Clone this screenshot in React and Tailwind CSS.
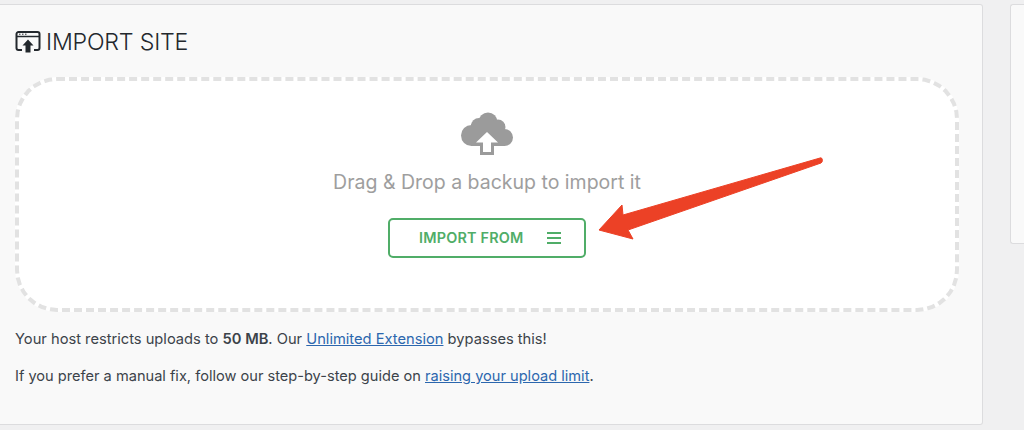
import React from "react";

const font = { fontFamily: "Inter, sans-serif" };

const SiteUploadIcon = () => (
  <svg width="26" height="24" viewBox="0 0 26 24" fill="none" className="shrink-0">
    <path d="M7 20H3.500A2 2 0 0 1 1.500 18V4A2 2 0 0 1 3.500 2H22.500A2 2 0 0 1 24.500 4V18A2 2 0 0 1 22.500 20H19" stroke="#23282d" strokeWidth="2" />
    <path d="M2 6.500H24" stroke="#23282d" strokeWidth="1.500" />
    <path d="M4 4.200H5.500M7 4.200H8.500M10 4.200H11.500" stroke="#23282d" strokeWidth="1" />
    <path d="M13 9.500L18.500 15.500H15.500V22.500H10.500V15.500H7.500Z" fill="#23282d" />
  </svg>
);

const CloudIcon = () => (
  <svg width="54" height="44" viewBox="0 0 54 44">
    <g fill="#9b9b9b">
      <circle cx="11.500" cy="23.500" r="10.500" />
      <circle cx="19" cy="14" r="8" />
      <circle cx="28" cy="10" r="9.500" />
      <circle cx="38" cy="15" r="7.500" />
      <circle cx="44.500" cy="25.500" r="8.500" />
      <rect x="11" y="12" width="34" height="22" />
      <rect x="20" y="30" width="14" height="13" />
    </g>
    <path d="M27 20L38 30.500H31V40H23V30.500H16Z" fill="#ffffff" />
  </svg>
);

const Arrow = () => (
  <svg
    width="240"
    height="100"
    viewBox="0 0 240 100"
    className="absolute left-[590px] top-[150px] pointer-events-none"
  >
    <path
      d="M9 80L32 55L33 65L230 8C233 7 233 12 231 13L38 80L43 89Z"
      fill="#ec4126"
      stroke="#ec4126"
      strokeWidth="1"
      strokeLinejoin="round"
    />
  </svg>
);

export default function App() {
  return (
    <div className="relative h-[430px] w-[1024px] overflow-hidden bg-[#f0f0f1] pt-1" style={font}>
      <div className="flex items-start gap-[27px]">
        <section className="h-[421px] w-[983px] shrink-0 rounded-r-[3px] border border-l-0 border-[#dcdcde] bg-[#f9f9f9] pl-[15px] pr-[23px] pt-[23px]">
          <h1 className="flex h-[28px] items-center gap-[5px] text-[23.200px] font-light leading-7 tracking-[-0.2px] text-[#23282d]">
            <SiteUploadIcon />
            IMPORT SITE
          </h1>

          <div className="mt-[21px] flex h-[235px] flex-col items-center rounded-[42px] border-4 border-dashed border-[#e2e2e2] bg-white pt-[31px]">
            <CloudIcon />
            <p className="mt-[14px] text-[19.500px] leading-6 text-[#9e9e9e]">
              Drag &amp; Drop a backup to import it
            </p>
            <button className="mt-6 flex h-10 w-[198px] items-center rounded-[5px] border-2 border-[#50ad68] pl-[29px] pr-[22px] text-[14.400px] font-semibold tracking-[0.2px] text-[#50ad68]">
              IMPORT FROM
              <svg width="16" height="14" viewBox="0 0 16 14" className="ml-auto">
                <path d="M1 2H15M1 7H15M1 12H15" stroke="#50ad68" strokeWidth="2" />
              </svg>
            </button>
          </div>

          <p className="mt-[17px] text-[14.680px] leading-5 text-[#3c434a]">
            Your host restricts uploads to <strong className="font-semibold">50 MB</strong>. Our{" "}
            <a href="#" className="text-[#2c67ae] underline">Unlimited Extension</a> bypasses this!
          </p>
          <p className="mt-[17px] text-[14.600px] leading-5 text-[#3c434a]">
            If you prefer a manual fix, follow our step-by-step guide on{" "}
            <a href="#" className="text-[#2c67ae] underline">raising your upload limit</a>.
          </p>
        </section>

        <aside className="h-[240px] w-[40px] shrink-0 rounded-l-[3px] border border-r-0 border-[#dcdcde] bg-[#f9f9f9]" />
      </div>

      <Arrow />
    </div>
  );
}
